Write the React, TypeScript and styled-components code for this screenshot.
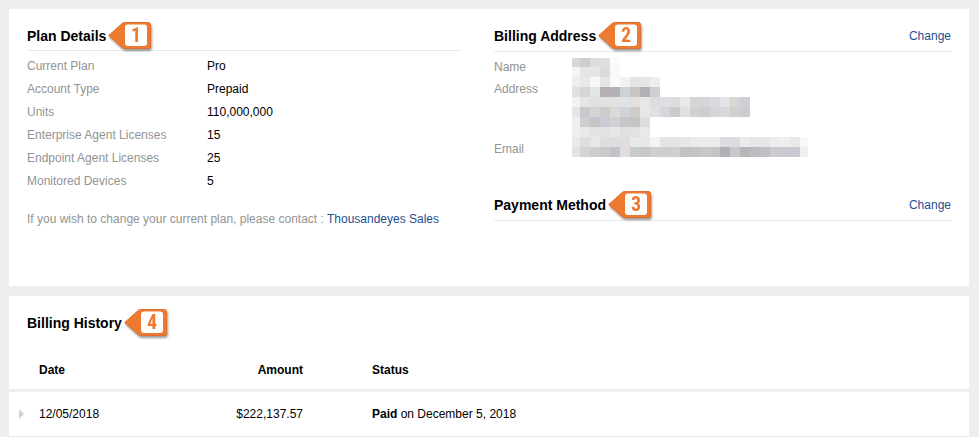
import React from 'react';
import styled, { createGlobalStyle } from 'styled-components';

const GlobalStyle = createGlobalStyle`
  *, *::before, *::after { box-sizing: border-box; }
  body {
    margin: 0;
    background: #eeeeee;
    color: #000000;
    font-family: "Liberation Sans", Arial, Helvetica, sans-serif;
    font-size: 12px;
    line-height: 18px;
  }
`;

const Page = styled.main`
  display: flex;
  flex-direction: column;
  gap: 10px;
  padding: 9px 10px 0 9px;
`;

const Card = styled.section`
  background: #ffffff;
  padding-top: 13px;
`;

const Overview = styled(Card)`
  display: grid;
  grid-template-columns: minmax(0, 435fr) minmax(0, 457fr);
  column-gap: 32px;
  padding: 13px 18px 58px;
`;

const Column = styled.div`
  display: flex;
  flex-direction: column;
`;

const SectionHead = styled.header<{ $ruled?: boolean; $gap?: number }>`
  display: flex;
  align-items: center;
  gap: 2px;
  padding-bottom: ${(p) => p.$gap ?? 0}px;
  border-bottom: ${(p) => (p.$ruled ? '1px solid #e9e9e9' : '0')};
`;

const Title = styled.h2`
  margin: 0;
  font-size: 14px;
  font-weight: 700;
  line-height: 18px;
  white-space: nowrap;
`;

const Link = styled.a`
  color: #1d4f91;
  text-decoration: none;

  &:hover { text-decoration: underline; }
`;

const HeadLink = styled(Link)`
  margin-left: auto;
`;

const BadgeSvg = styled.svg`
  display: block;
  flex: none;
  overflow: visible;
  filter: drop-shadow(1px 2px 1px rgba(0, 0, 0, 0.4));
`;

const BadgeDigit = styled.text`
  font-family: "Roboto Condensed", "Open Sans Condensed", "Liberation Sans Narrow", Roboto, sans-serif;
  font-size: 20px;
  font-weight: 700;
  fill: #ee7a30;
  text-anchor: middle;
`;

const PlanList = styled.dl`
  display: grid;
  grid-template-columns: 180px 1fr;
  grid-auto-rows: 23px;
  line-height: 23px;
  margin: 0;
  padding-top: 4px;
`;

const Term = styled.dt`
  color: #939393;
`;

const Value = styled.dd`
  margin: 0;
`;

const Note = styled.p`
  margin: 17px 0 0;
  color: #939393;
`;

const AddressList = styled.dl`
  display: grid;
  grid-template-columns: 78px 1fr;
  grid-template-rows: 20px 60px 24px;
  line-height: 24px;
  margin: 0 0 30px;
  padding-top: 5px;
`;

const AddressTerm = styled(Term)<{ $centered?: boolean }>`
  align-self: ${(p) => (p.$centered ? 'center' : 'start')};
`;

const AddressValue = styled(Value)<{ $end?: boolean }>`
  align-self: ${(p) => (p.$end ? 'end' : 'start')};
`;

const MosaicSvg = styled.svg`
  display: block;
`;

const HistoryHead = styled.div`
  padding: 0 18px 14px;
`;

const HistoryTable = styled.table`
  width: 100%;
  table-layout: fixed;
  border-collapse: separate;
  border-spacing: 0;
`;

const Col = styled.col<{ $width?: number }>`
  width: ${(p) => (p.$width ? `${p.$width}px` : 'auto')};
`;

type CellProps = { $right?: boolean; $indent?: boolean };

const HeadCell = styled.th<CellProps>`
  height: 41px;
  padding: 0 0 0 ${(p) => (p.$indent ? 69 : 0)}px;
  border-bottom: 3px solid #eeeeee;
  font-weight: 700;
  text-align: ${(p) => (p.$right ? 'right' : 'left')};
`;

const Cell = styled.td<CellProps>`
  height: 45px;
  padding: 0 0 0 ${(p) => (p.$indent ? 69 : 0)}px;
  border-bottom: 1px solid #e9e9e9;
  text-align: ${(p) => (p.$right ? 'right' : 'left')};
`;

const ExpandButton = styled.button`
  display: flex;
  padding: 0 0 0 10px;
  border: 0;
  background: none;
  cursor: pointer;
`;

function Badge({ value }: { value: number }) {
  return (
    <BadgeSvg width="43" height="28" viewBox="0 0 43 28" role="img" aria-label={`Step ${value}`}>
      <path
        d="M0.7 13.5 L14.5 1.2 Q15.3 0.5 16.5 0.5 H40.5 Q42.5 0.5 42.5 2.5 V24.5 Q42.5 26.5 40.5 26.5 H16.5 Q15.3 26.5 14.5 25.8 Z"
        fill="#ee7a30"
        stroke="#e07030"
      />
      <rect x="17" y="2.5" width="22" height="21.5" rx="3" fill="#ffffff" />
      <BadgeDigit x="28" y="20">{value}</BadgeDigit>
    </BadgeSvg>
  );
}

const FIRST_CELL = 8;
const CELL = 10;
const MOSAIC_WIDTH = 236;

const NAME_CELLS = [
  'dad6d6 cecece dbdddf e0dde0 f8fafb',
  'f4f4f4 e4e5e4 e4e5e4 dbdbdc f7fafb',
];

const ADDRESS_CELLS = [
  'efecee e8e8e8 f7f7f7 e5e6e7 fafafa f2f2f2 e6e4e6 e6e6e9 ededeb',
  'e1dfe3 d5d5d6 e2e5e6 b4b0af b3b1b7 ccd2d5 c6c5c5 b1b1b5 cfcfd0',
  'f3f1f6 e4e6e3 dee1df e1e2e0 e1e2df dfe2e7 e2e1e0 e8e8e9 dadfde dddfe5 dcdedd ebe9e8 d6d6d9 d5d4d9 d8dadd e2e3e6 d6d6d3 d0cfd6',
  'e6e4e8 c9c9cd d2d5d6 cecbcd dcdad8 d1d2da d0cbcb e6e7e9 dfe0e1 d5d5dd cacbca e0e0e0 d1d1d2 d0cdd0 d4d7d9 d7d9dc d1d0cc cccbd2',
  'efeef2 cccfce c7c4c8 c9cad5 d2d1d3 c9c6c9 c7c4c6 dddee0',
  'f0efed e9ebea e4e2e4 e0e2e4 e7e7e7 e2e0df e1e2e3 e9e9e9',
];

const EMAIL_CELLS = [
  'ebe9e7 dddede e7e7e8 dddcde dedddf e1dde2 e8eaea e7e8ea f4f4f4 e4e4e4 e4e4e4 e8e6e6 ebebeb ececec ebebeb dcddde dadae1 ebebeb e7e6e8 e6e6e8 ecebef eeeeed e9e9e9 f8f8f8',
  'e3e3e1 d5d4d0 cfcccf cbc8cb c1c3c9 e2dde0 c9cbcc c7c8ca d0ccd1 cccfce cdd0cf c6c1c1 c0c5c7 cbc7c6 c3c6c9 aeb0b3 c9c7ce b7b5b8 bdbbc0 c0bfc3 cccbd2 cbc9d0 c6ccd0 f3efef',
];

/* Pixelated block standing in for a redacted value. */
function Mosaic({ rows, label, firstRow = CELL }: { rows: string[]; label: string; firstRow?: number }) {
  const height = firstRow + (rows.length - 1) * CELL;
  return (
    <MosaicSvg
      width={MOSAIC_WIDTH}
      height={height}
      viewBox={`0 0 ${MOSAIC_WIDTH} ${height}`}
      shapeRendering="crispEdges"
      role="img"
      aria-label={label}
    >
      {rows.map((row, r) =>
        row.split(' ').map((color, c) => (
          <rect
            key={`${r}-${c}`}
            x={c === 0 ? 0 : FIRST_CELL + (c - 1) * CELL}
            y={r === 0 ? 0 : firstRow + (r - 1) * CELL}
            width={c === 0 || c === 23 ? FIRST_CELL : CELL}
            height={r === 0 ? firstRow : CELL}
            fill={`#${color}`}
          />
        )),
      )}
    </MosaicSvg>
  );
}

const PLAN = [
  ['Current Plan', 'Pro'],
  ['Account Type', 'Prepaid'],
  ['Units', '110,000,000'],
  ['Enterprise Agent Licenses', '15'],
  ['Endpoint Agent Licenses', '25'],
  ['Monitored Devices', '5'],
];

export default function App() {
  return (
    <>
      <GlobalStyle />
      <Page>
        <Overview>
          <Column>
            <SectionHead $ruled>
              <Title>Plan Details</Title>
              <Badge value={1} />
            </SectionHead>
            <PlanList>
              {PLAN.map(([term, value]) => (
                <React.Fragment key={term}>
                  <Term>{term}</Term>
                  <Value>{value}</Value>
                </React.Fragment>
              ))}
            </PlanList>
            <Note>
              If you wish to change your current plan, please contact : <Link href="#sales">Thousandeyes Sales</Link>
            </Note>
          </Column>
          <Column>
            <SectionHead $ruled $gap={1}>
              <Title>Billing Address</Title>
              <Badge value={2} />
              <HeadLink href="#address">Change</HeadLink>
            </SectionHead>
            <AddressList>
              <AddressTerm $centered>Name</AddressTerm>
              <AddressValue $end>
                <Mosaic rows={NAME_CELLS} firstRow={9} label="Hidden name" />
              </AddressValue>
              <AddressTerm>Address</AddressTerm>
              <AddressValue>
                <Mosaic rows={ADDRESS_CELLS} label="Hidden address" />
              </AddressValue>
              <AddressTerm>Email</AddressTerm>
              <AddressValue>
                <Mosaic rows={EMAIL_CELLS} label="Hidden email" />
              </AddressValue>
            </AddressList>
            <SectionHead $ruled $gap={1}>
              <Title>Payment Method</Title>
              <Badge value={3} />
              <HeadLink href="#payment">Change</HeadLink>
            </SectionHead>
          </Column>
        </Overview>
        <Card>
          <HistoryHead>
            <SectionHead>
              <Title>Billing History</Title>
              <Badge value={4} />
            </SectionHead>
          </HistoryHead>
          <HistoryTable>
            <colgroup>
              <Col $width={30} />
              <Col $width={132} />
              <Col $width={132} />
              <Col />
            </colgroup>
            <thead>
              <tr>
                <HeadCell aria-label="Expand" />
                <HeadCell scope="col">Date</HeadCell>
                <HeadCell scope="col" $right>Amount</HeadCell>
                <HeadCell scope="col" $indent>Status</HeadCell>
              </tr>
            </thead>
            <tbody>
              <tr>
                <Cell>
                  <ExpandButton type="button" aria-label="Show invoice details" aria-expanded={false}>
                    <svg width="5" height="10" viewBox="0 0 5 10" aria-hidden="true">
                      <path d="M0 0 L5 5 L0 10 Z" fill="#c5d3e0" />
                    </svg>
                  </ExpandButton>
                </Cell>
                <Cell>12/05/2018</Cell>
                <Cell $right>$222,137.57</Cell>
                <Cell $indent>
                  <strong>Paid</strong> on December 5, 2018
                </Cell>
              </tr>
            </tbody>
          </HistoryTable>
        </Card>
      </Page>
    </>
  );
}
